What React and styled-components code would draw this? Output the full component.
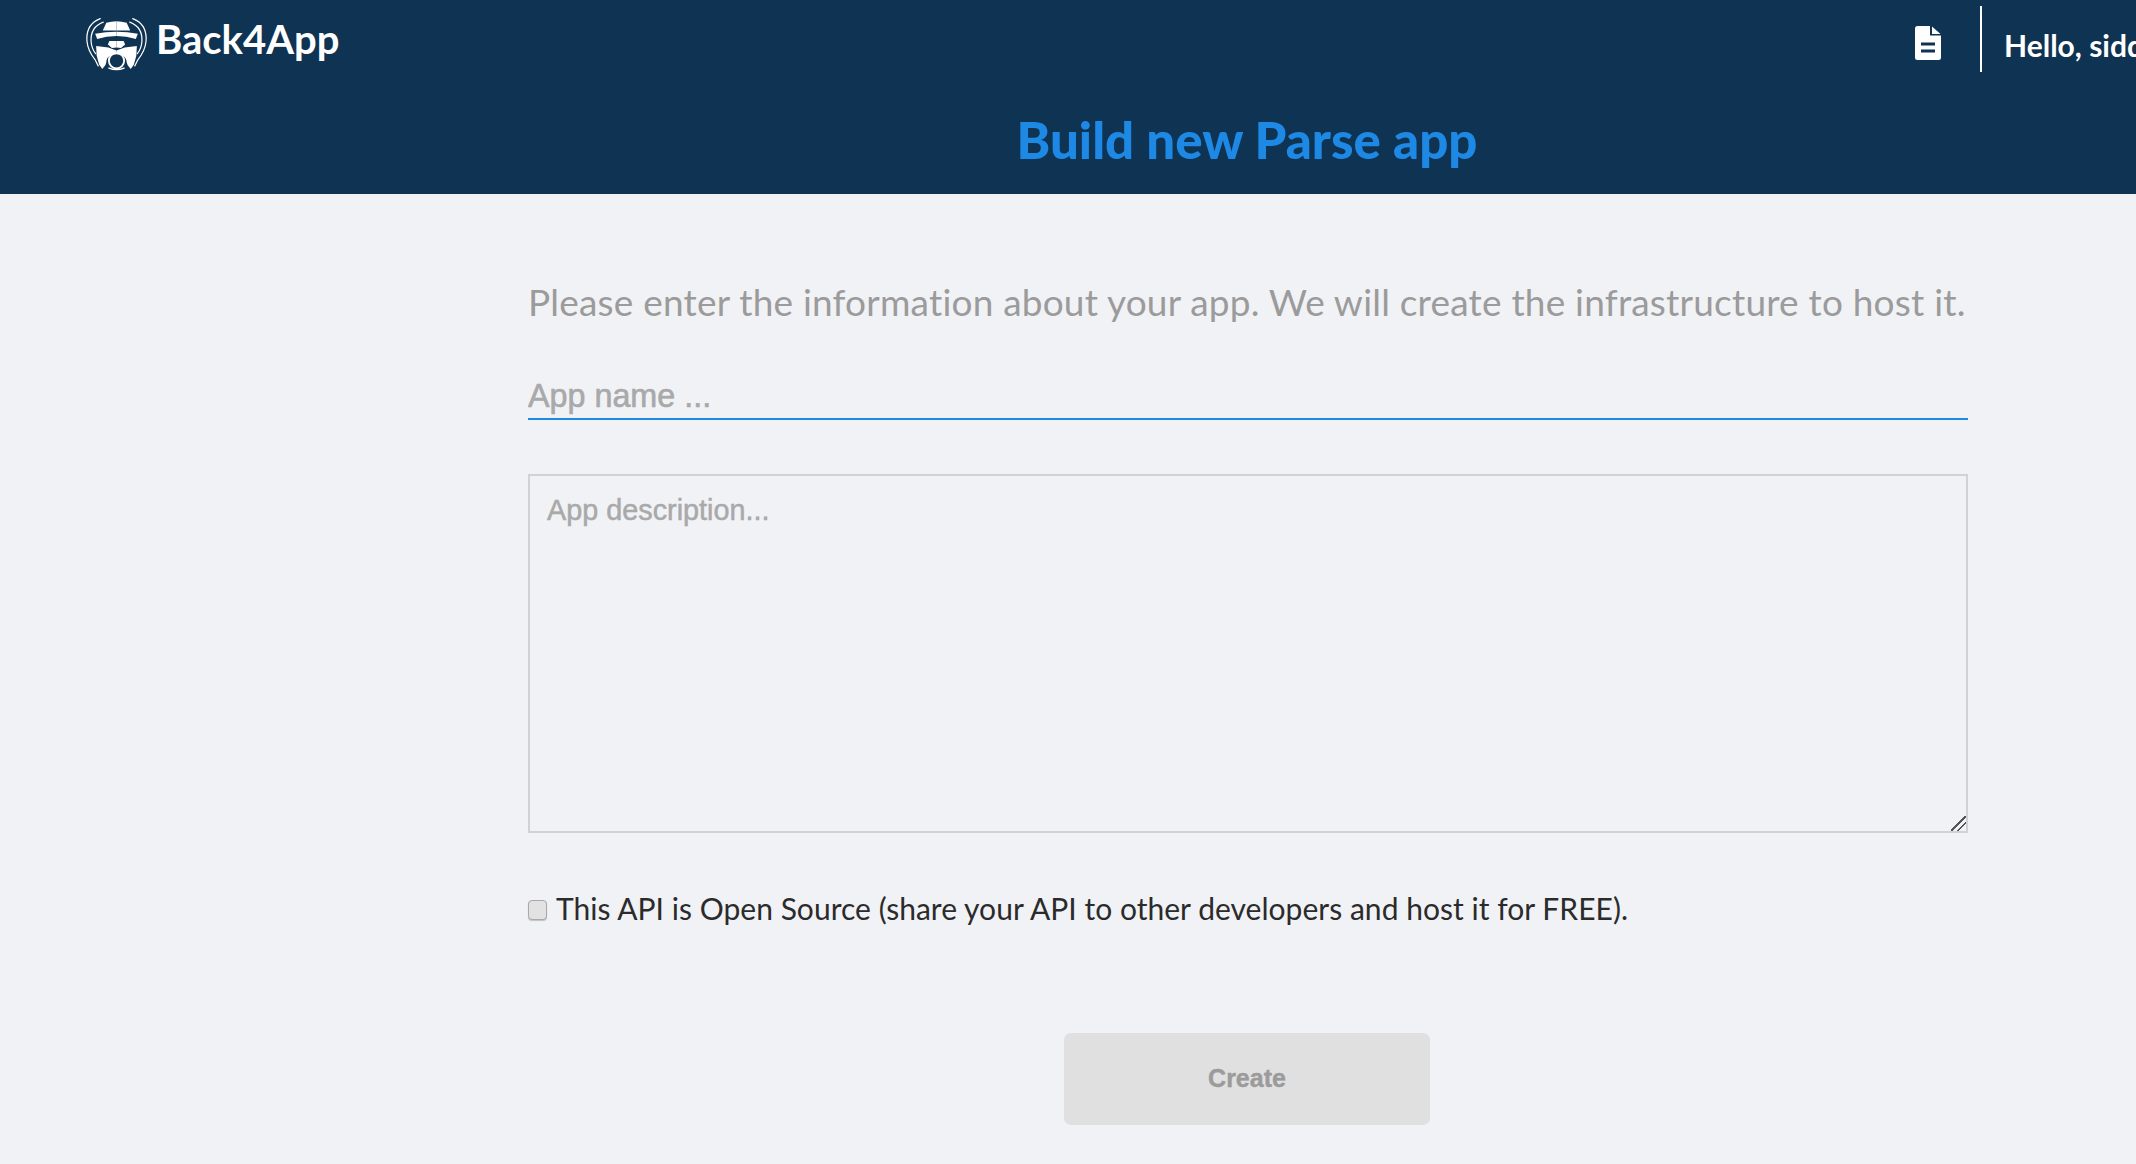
import React from 'react';
import styled, { createGlobalStyle } from 'styled-components';

const GlobalStyle = createGlobalStyle`
  html, body {
    margin: 0;
    padding: 0;
    background: #f1f2f6;
  }

  body {
    font-family: Lato, "Open Sans", sans-serif;
    overflow: hidden;
  }
`;

const LogoSide = () => (
  <>
    <g fill="none" stroke="#fff" strokeWidth="1.2" strokeLinecap="round">
      <path d="M14 2.500C5 6 0 14 1 25c.6 7 4 13 8 18l3 6" />
      <path d="M17 6C9 9 4.500 16 5 25c.4 5 2 9 4.500 12" />
    </g>
    <path fill="#fff" d="M10 29.500l12 1.500 8 3v3.500c-6 0-10 3-10 8l-1 3-3 3.500-3-4-2.500-9z" />
    <path fill="#fff" d="M9 17.500q10-2 21-2v4q-10 0-19 3z" />
    <path fill="#fff" d="M20 6.500q5-1.500 10-1.500v9.300H16.500z" />
    <path fill="#fff" d="M30 24.500h-7l-1.500 3.500 4 3.500 4.500-.5z" />
  </>
);

const Logo = () => (
  <LogoMark viewBox="0 0 60 54">
    <LogoSide />
    <g transform="matrix(-1 0 0 1 60 0)">
      <LogoSide />
    </g>
    <circle cx="30" cy="44" r="7.500" fill="none" stroke="#fff" strokeWidth="1.800" />
    <path d="M22 51q8 3.500 16 0" fill="none" stroke="#fff" strokeWidth="1.300" />
  </LogoMark>
);

const DocIcon = () => (
  <DocMark viewBox="0 0 26 34">
    <path
      d="M2.500 0H15v9.500h11V31.500A2.500 2.500 0 0 1 23.500 34h-21A2.500 2.500 0 0 1 0 31.500v-29A2.500 2.500 0 0 1 2.500 0z"
      fill="#fff"
    />
    <path d="M17 0.500 25.500 8H17z" fill="#fff" />
    <path d="M6 16.500h14v3H6zM6 23.500h14v3H6z" fill="#0f3352" />
  </DocMark>
);

const App = () => (
  <Page>
    <GlobalStyle />
    <Header>
      <TopBar>
        <Brand>
          <Logo />
          <BrandName>Back4App</BrandName>
        </Brand>
        <UserArea>
          <DocIcon />
          <Divider />
          <Greeting>Hello, sidd</Greeting>
        </UserArea>
      </TopBar>
      <Title>Build new Parse app</Title>
    </Header>
    <Main>
      <Form>
        <Intro>Please enter the information about your app. We will create the infrastructure to host it.</Intro>
        <NameInput placeholder="App name ..." />
        <Description placeholder="App description..." />
        <OpenSource>
          <Check type="checkbox" />
          <CheckText>This API is Open Source (share your API to other developers and host it for FREE).</CheckText>
        </OpenSource>
        <CreateButton type="button">Create</CreateButton>
      </Form>
    </Main>
  </Page>
);

const Page = styled.div`
  width: 2136px;
  height: 1164px;
  overflow: hidden;
  background: #f1f2f6;
`;

const Header = styled.header`
  height: 194px;
  background: #0f3352;
  display: flex;
  flex-direction: column;
`;

const TopBar = styled.div`
  height: 78px;
  display: flex;
  justify-content: space-between;
  padding: 0 0 0 86px;
`;

const Brand = styled.div`
  display: flex;
  align-items: flex-start;
  padding-top: 16px;
  gap: 9px;
`;

const LogoMark = styled.svg`
  width: 61px;
  height: 55px;
  display: block;
`;

const BrandName = styled.span`
  color: #fff;
  font-size: 40px;
  font-weight: 700;
  line-height: 46px;
`;

const UserArea = styled.div`
  display: flex;
  align-items: flex-start;
  width: 221px;
  overflow: hidden;
  white-space: nowrap;
`;

const DocMark = styled.svg`
  width: 26px;
  height: 34px;
  margin-top: 26px;
  flex: none;
`;

const Divider = styled.div`
  width: 2px;
  height: 66px;
  margin: 6px 22px 0 39px;
  background: #fff;
  flex: none;
`;

const Greeting = styled.span`
  color: #fff;
  font-size: 30px;
  font-weight: 700;
  line-height: 36px;
  margin-top: 27px;
`;

const Title = styled.h1`
  margin: 33px 0 0;
  padding-left: 358px;
  text-align: center;
  color: #1e88e5;
  font-size: 51px;
  font-weight: 900;
  line-height: 58px;
`;

const Main = styled.main`
  padding-left: 360px;
  display: flex;
  justify-content: center;
`;

const Form = styled.div`
  width: 1440px;
  display: flex;
  flex-direction: column;
  padding-top: 85px;
`;

const Intro = styled.p`
  margin: 0;
  color: #9b9b9b;
  font-size: 37px;
  font-weight: 400;
  letter-spacing: 0.2px;
  line-height: 46px;
  white-space: nowrap;
`;

const NameInput = styled.input`
  box-sizing: border-box;
  height: 50px;
  margin-top: 45px;
  padding: 5px 0 0;
  border: 0;
  border-bottom: 2px solid #1e88e5;
  outline: 0;
  background: transparent;
  font-family: "Liberation Sans", Arial, sans-serif;
  font-size: 32.300px;

  &::placeholder {
    color: #a9a9a9;
    opacity: 1;
    -webkit-text-stroke: 0.6px #a9a9a9;
  }
`;

const Description = styled.textarea`
  box-sizing: border-box;
  height: 359px;
  margin-top: 54px;
  padding: 16px 17px;
  border: 2px solid #cfd3d7;
  outline: 0;
  background: transparent;
  font-family: "Liberation Sans", Arial, sans-serif;
  font-size: 28.800px;
  line-height: 36px;
  resize: vertical;

  &::placeholder {
    color: #a9a9a9;
    opacity: 1;
    -webkit-text-stroke: 0.5px #a9a9a9;
  }

  &::-webkit-resizer {
    background: linear-gradient(
      135deg,
      transparent 46%,
      #555 46%,
      #555 54%,
      transparent 54%,
      transparent 68%,
      #555 68%,
      #555 76%,
      transparent 76%
    );
  }
`;

const OpenSource = styled.label`
  display: flex;
  align-items: center;
  gap: 9px;
  margin-top: 55px;
`;

const Check = styled.input`
  appearance: none;
  box-sizing: border-box;
  width: 19px;
  height: 20px;
  margin: 4px 0 0;
  flex: none;
  border: 1px solid #a8a8a8;
  border-radius: 4px;
  background: #e2e2e2;
  box-shadow: 0 1px 1px rgba(0, 0, 0, 0.2);
`;

const CheckText = styled.span`
  color: #2b2b2b;
  font-size: 30px;
  letter-spacing: 0.03px;
  line-height: 40px;
  white-space: nowrap;
`;

const CreateButton = styled.button`
  align-self: center;
  width: 366px;
  height: 92px;
  margin-top: 105px;
  margin-right: 2px;
  padding: 0 0 2px;
  border: 0;
  border-radius: 7px;
  background: #e0e0e0;
  color: #9b9b9b;
  font-family: "Liberation Sans", Arial, sans-serif;
  font-size: 25px;
  font-weight: 700;
  -webkit-text-stroke: 0.4px #9b9b9b;
`;

export default App;
